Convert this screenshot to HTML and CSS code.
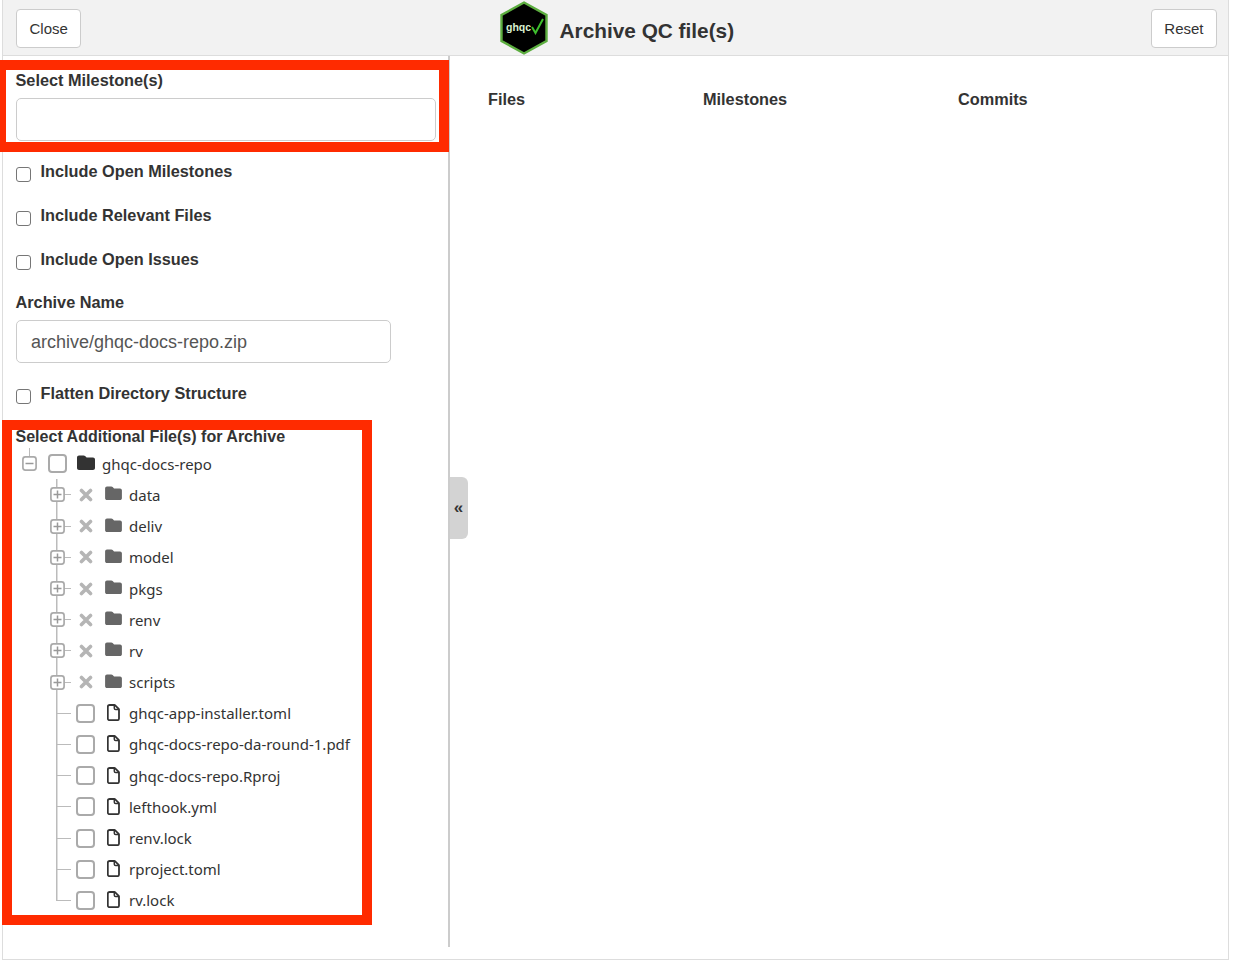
FILE: index.html
```html
<!DOCTYPE html>
<html lang="en">
<head>
    <meta charset="UTF-8">
    <meta name="viewport" content="width=device-width, initial-scale=1.0">
    <title>Archive QC file(s)</title>
    <link rel="stylesheet" href="styles.css">
</head>
<body>
    <!-- icons used by the file tree -->
    <svg class="icon-defs" aria-hidden="true">
        <symbol id="ic-folder" viewBox="0 0 18 15">
            <path d="M2 0.5h4.6c.6 0 1.1.2 1.5.6L9.6 2.6H16c1.1 0 2 .9 2 2V13c0 1.1-.9 2-2 2H2c-1.1 0-2-.9-2-2V2.500C0 1.4.9.5 2 .5z"/>
        </symbol>
        <symbol id="ic-file" viewBox="0 0 13 17">
            <path d="M2.6 1h4.9c.3 0 .5.1.7.3l3.5 3.5c.2.2.3.4.3.7v8.9c0 1-.8 1.800-1.800 1.800H2.600c-1 0-1.800-.8-1.800-1.800V2.800C.8 1.800 1.600 1 2.600 1z" fill="none" stroke="currentColor" stroke-width="1.800"/>
            <path d="M7.300 1v3.200c0 .8.600 1.400 1.400 1.400H12" fill="none" stroke="currentColor" stroke-width="1.500"/>
        </symbol>
        <symbol id="ic-x" viewBox="0 0 14 14">
            <path d="M2.500 2.500l9 9M11.500 2.500l-9 9" fill="none" stroke="currentColor" stroke-width="3.600" stroke-linecap="round"/>
        </symbol>
        <symbol id="ic-plus" viewBox="0 0 15 15">
            <rect x=".9" y=".9" width="13.200" height="13.200" rx="2.500" fill="#fff" stroke="currentColor" stroke-width="1.700"/>
            <path d="M3.500 7.500h8M7.500 3.500v8" fill="none" stroke="#999" stroke-width="1.500"/>
        </symbol>
        <symbol id="ic-minus" viewBox="0 0 15 15">
            <rect x=".9" y=".9" width="13.200" height="13.200" rx="2.500" fill="#fff" stroke="currentColor" stroke-width="1.700"/>
            <path d="M3.500 7.500h8" fill="none" stroke="#999" stroke-width="1.500"/>
        </symbol>
    </svg>

    <div class="shell">
        <header class="topbar">
            <button class="btn">Close</button>
            <div class="brand">
                <svg class="logo" viewBox="0 0 48 54">
                    <polygon points="24,1.500 46.500,14 46.500,40 24,52.500 1.500,40 1.500,14" fill="#000" stroke="#5cad3f" stroke-width="2.400"/>
                    <text x="6" y="30" class="logo-text">ghqc</text>
                    <path d="M32 26l3.500 6L43 18" fill="none" stroke="#3fbf2e" stroke-width="2"/>
                </svg>
                <h1 class="title">Archive QC file(s)</h1>
            </div>
            <button class="btn">Reset</button>
        </header>

        <div class="panels">
            <aside class="sidebar">
                <label class="field-label">Select Milestone(s)</label>
                <input class="text-input milestone-input" type="text">

                <label class="check-row first"><input type="checkbox" class="check">Include Open Milestones</label>
                <label class="check-row"><input type="checkbox" class="check">Include Relevant Files</label>
                <label class="check-row"><input type="checkbox" class="check">Include Open Issues</label>

                <label class="field-label archive-label">Archive Name</label>
                <input class="text-input archive-input" type="text" value="archive/ghqc-docs-repo.zip">

                <label class="check-row first"><input type="checkbox" class="check">Flatten Directory Structure</label>

                <label class="field-label files-label">Select Additional File(s) for Archive</label>

                <div class="tree">
                    <div class="tree-row root-row">
                        <svg class="toggle root-toggle"><use href="#ic-minus"/></svg>
                        <span class="tree-check"></span>
                        <svg class="folder root-folder"><use href="#ic-folder"/></svg>
                        <span class="tree-label">ghqc-docs-repo</span>
                    </div>
                    <div class="children">
                        <div class="tree-row"><span class="elbow"><svg class="toggle"><use href="#ic-plus"/></svg></span><svg class="cross"><use href="#ic-x"/></svg><svg class="folder"><use href="#ic-folder"/></svg><span class="tree-label">data</span></div>
                        <div class="tree-row"><span class="elbow"><svg class="toggle"><use href="#ic-plus"/></svg></span><svg class="cross"><use href="#ic-x"/></svg><svg class="folder"><use href="#ic-folder"/></svg><span class="tree-label">deliv</span></div>
                        <div class="tree-row"><span class="elbow"><svg class="toggle"><use href="#ic-plus"/></svg></span><svg class="cross"><use href="#ic-x"/></svg><svg class="folder"><use href="#ic-folder"/></svg><span class="tree-label">model</span></div>
                        <div class="tree-row"><span class="elbow"><svg class="toggle"><use href="#ic-plus"/></svg></span><svg class="cross"><use href="#ic-x"/></svg><svg class="folder"><use href="#ic-folder"/></svg><span class="tree-label">pkgs</span></div>
                        <div class="tree-row"><span class="elbow"><svg class="toggle"><use href="#ic-plus"/></svg></span><svg class="cross"><use href="#ic-x"/></svg><svg class="folder"><use href="#ic-folder"/></svg><span class="tree-label">renv</span></div>
                        <div class="tree-row"><span class="elbow"><svg class="toggle"><use href="#ic-plus"/></svg></span><svg class="cross"><use href="#ic-x"/></svg><svg class="folder"><use href="#ic-folder"/></svg><span class="tree-label">rv</span></div>
                        <div class="tree-row"><span class="elbow"><svg class="toggle"><use href="#ic-plus"/></svg></span><svg class="cross"><use href="#ic-x"/></svg><svg class="folder"><use href="#ic-folder"/></svg><span class="tree-label">scripts</span></div>
                        <div class="tree-row file-row"><span class="elbow"></span><span class="tree-check"></span><svg class="file"><use href="#ic-file"/></svg><span class="tree-label">ghqc-app-installer.toml</span></div>
                        <div class="tree-row file-row"><span class="elbow"></span><span class="tree-check"></span><svg class="file"><use href="#ic-file"/></svg><span class="tree-label">ghqc-docs-repo-da-round-1.pdf</span></div>
                        <div class="tree-row file-row"><span class="elbow"></span><span class="tree-check"></span><svg class="file"><use href="#ic-file"/></svg><span class="tree-label">ghqc-docs-repo.Rproj</span></div>
                        <div class="tree-row file-row"><span class="elbow"></span><span class="tree-check"></span><svg class="file"><use href="#ic-file"/></svg><span class="tree-label">lefthook.yml</span></div>
                        <div class="tree-row file-row"><span class="elbow"></span><span class="tree-check"></span><svg class="file"><use href="#ic-file"/></svg><span class="tree-label">renv.lock</span></div>
                        <div class="tree-row file-row"><span class="elbow"></span><span class="tree-check"></span><svg class="file"><use href="#ic-file"/></svg><span class="tree-label">rproject.toml</span></div>
                        <div class="tree-row file-row last"><span class="elbow"></span><span class="tree-check"></span><svg class="file"><use href="#ic-file"/></svg><span class="tree-label">rv.lock</span></div>
                    </div>
                </div>
            </aside>

            <main class="content">
                <div class="columns">
                    <span>Files</span>
                    <span>Milestones</span>
                    <span>Commits</span>
                </div>
            </main>

            <div class="collapse-tab">«</div>
        </div>
    </div>

    <!-- red annotation boxes from the screenshot -->
    <div class="callout callout-milestone"></div>
    <div class="callout callout-files"></div>
</body>
</html>
```

FILE: styles.css
```css
body {
    margin: 0;
    font-family: "Liberation Sans", Arial, sans-serif;
    color: #333;
    background: #fff;
    position: relative;
    height: 961px;
    overflow: hidden;
}

.icon-defs {
    display: none;
}

.shell {
    margin-left: 2px;
    width: 1227px;
    height: 960px;
    box-sizing: border-box;
    border: 1px solid #ddd;
    border-top: none;
}

.topbar {
    height: 56px;
    box-sizing: border-box;
    padding: 9px 11px 0 13px;
    background: #f2f2f2;
    border-bottom: 1px solid #ddd;
    display: flex;
    justify-content: space-between;
    align-items: flex-start;
}

.btn {
    height: 39px;
    padding: 0 12.500px;
    font-family: inherit;
    font-size: 15px;
    color: #333;
    background: #fff;
    border: 1px solid #ccc;
    border-radius: 4px;
}

.brand {
    display: flex;
    align-items: center;
    gap: 11.500px;
    margin: -8px 0 0 2px;
}

.logo {
    width: 48px;
    height: 54px;
}

.logo-text {
    font-family: "Liberation Sans", Arial, sans-serif;
    font-size: 10.500px;
    font-weight: 700;
    fill: #d9f0d0;
}

.title {
    margin: 5px 0 0;
    font-size: 20.800px;
    font-weight: 700;
    line-height: 26px;
}

.panels {
    display: flex;
    align-items: flex-start;
    position: relative;
}

.sidebar {
    width: 447px;
    height: 891px;
    box-sizing: border-box;
    padding: 15px 0 0 13px;
    border-right: 2px solid #ccc;
    flex-shrink: 0;
}

.field-label {
    display: block;
    height: 20px;
    margin-left: -.5px;
    font-size: 16.300px;
    font-weight: 700;
    line-height: 18px;
}

.text-input {
    display: block;
    box-sizing: border-box;
    height: 43px;
    margin-top: 7px;
    padding: 2px 14px 0;
    font-family: inherit;
    font-size: 18px;
    color: #555;
    border: 1px solid #ccc;
    border-radius: 5px;
}

.milestone-input {
    width: 420px;
}

.archive-input {
    width: 375px;
}

.check-row {
    display: flex;
    gap: 9.500px;
    height: 20px;
    margin-top: 24px;
    font-size: 16.300px;
    font-weight: 700;
    line-height: 18px;
}

.check-row.first {
    margin-top: 21px;
}

.check {
    appearance: none;
    width: 15px;
    height: 15px;
    margin: 5px 0 0;
    box-sizing: border-box;
    background: #fff;
    border: 1px solid #767676;
    border-radius: 3px;
}

.archive-label {
    margin-top: 23px;
}

.files-label {
    margin-top: 23px;
    font-size: 16.050px;
}

/* дерево файлов */
.tree {
    margin-top: 1.200px;
    font-family: "Noto Sans", sans-serif;
    font-size: 15px;
    color: #333;
}

.tree-row {
    display: flex;
    align-items: center;
    height: 31.200px;
}

.tree-check {
    width: 19px;
    height: 19px;
    box-sizing: border-box;
    background: #fff;
    border: 2px solid #aaa;
    border-radius: 4px;
    flex-shrink: 0;
}

.tree-label {
    white-space: nowrap;
    margin-left: 7px;
}

.toggle {
    width: 15px;
    height: 15px;
    color: #aaa;
    flex-shrink: 0;
}

.root-row {
    padding-left: 6px;
    background: linear-gradient(#bbb, #bbb) 13px 0 / 1px 9px no-repeat;
}

.root-toggle {
    margin-right: 11px;
}

.folder {
    width: 17px;
    height: 14px;
    fill: #666;
    flex-shrink: 0;
    margin-bottom: 3px;
}

.root-folder {
    width: 18px;
    height: 15px;
    fill: #333;
    margin-left: 10px;
}

.children {
    margin-left: 40px;
}

.elbow {
    display: flex;
    align-items: center;
    width: 17px;
    height: 100%;
    flex-shrink: 0;
    background:
        linear-gradient(#bbb, #bbb) 0 0 / 1.500px 100% no-repeat,
        linear-gradient(#bbb, #bbb) 0 50% / 15px 1px no-repeat;
}

.last .elbow {
    background:
        linear-gradient(#bbb, #bbb) 0 0 / 1.500px 50% no-repeat,
        linear-gradient(#bbb, #bbb) 0 50% / 15px 1px no-repeat;
}

.elbow .toggle {
    margin-left: -6.500px;
}

.cross {
    width: 14px;
    height: 14px;
    margin: 0 12.500px 0 5.500px;
    color: #b5b5b5;
    flex-shrink: 0;
}

.file {
    width: 13px;
    height: 17px;
    margin: 0 2px 1px 12px;
    color: #333;
    flex-shrink: 0;
}

.file-row .tree-check {
    margin-left: 3px;
}

.content {
    flex: 1;
    padding: 34px 0 0 38px;
}

.columns {
    display: grid;
    grid-template-columns: 215px 255px auto;
    justify-content: start;
    font-size: 16.300px;
    font-weight: 700;
    line-height: 18px;
}

.collapse-tab {
    position: absolute;
    left: 447px;
    top: 421px;
    width: 18px;
    height: 62px;
    box-sizing: border-box;
    padding: 0 1px 2px 0;
    background: #d3d3d3;
    border-radius: 0 6px 6px 0;
    display: flex;
    align-items: center;
    justify-content: center;
    font-size: 17px;
    font-weight: 700;
    line-height: 1;
    color: #333;
}

.callout {
    position: absolute;
    box-sizing: border-box;
    border: 10px solid #ff2b00;
    pointer-events: none;
}

.callout-milestone {
    left: 0;
    top: 60px;
    width: 449px;
    height: 92px;
    border-left-width: 6px;
}

.callout-files {
    left: 2px;
    top: 420px;
    width: 370px;
    height: 505px;
}
```
